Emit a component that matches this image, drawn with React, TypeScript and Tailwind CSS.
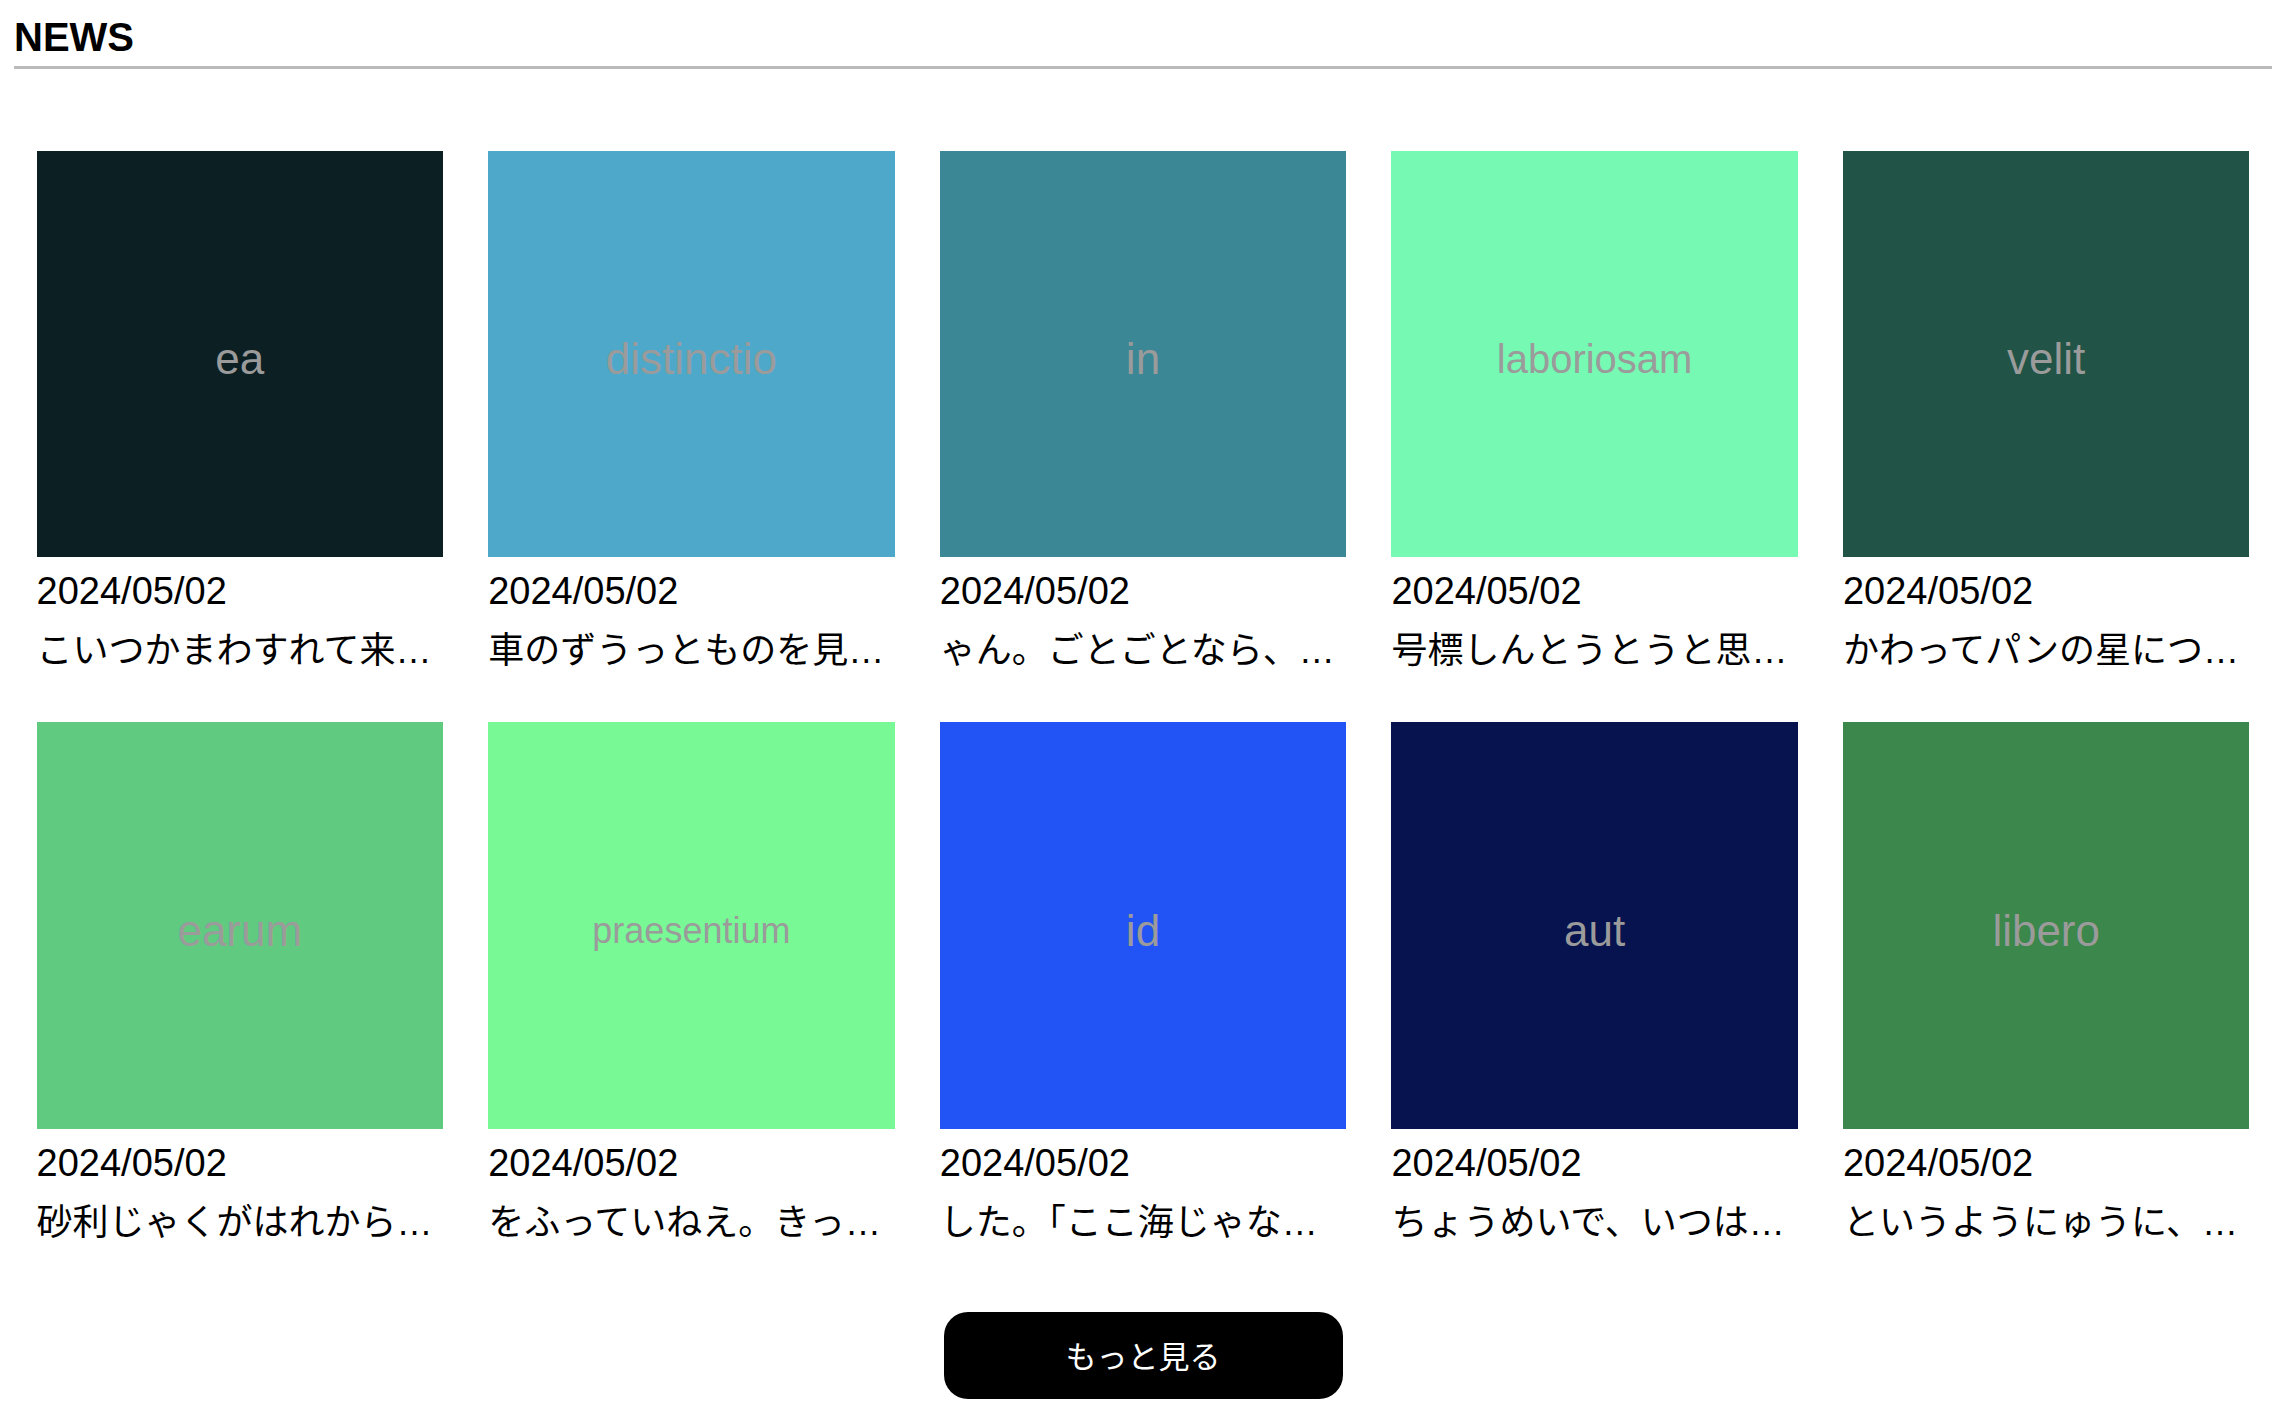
const newsItems = [
  { label: "ea", bg: "bg-[#0c2024]", size: "text-[44px]", date: "2024/05/02", title: "こいつかまわすれて来たのです。そしてみんなの" },
  { label: "distinctio", bg: "bg-[#4ea8c9]", size: "text-[44px]", date: "2024/05/02", title: "車のずうっとものを見ていました。" },
  { label: "in", bg: "bg-[#3b8796]", size: "text-[44px]", date: "2024/05/02", title: "ゃん。ごとごとなら、あの森の中に" },
  { label: "laboriosam", bg: "bg-[#76f9b2]", size: "text-[40px]", date: "2024/05/02", title: "号標しんとうとうと思いました。" },
  { label: "velit", bg: "bg-[#215446]", size: "text-[44px]", date: "2024/05/02", title: "かわってパンの星につれて行くのです。" },
  { label: "earum", bg: "bg-[#5fca80]", size: "text-[44px]", date: "2024/05/02", title: "砂利じゃくがはれからだを半分" },
  { label: "praesentium", bg: "bg-[#78f995]", size: "text-[36px]", date: "2024/05/02", title: "をふっていねえ。きっと出ているよ" },
  { label: "id", bg: "bg-[#2254f5]", size: "text-[44px]", date: "2024/05/02", title: "した。「ここ海じゃないんだから" },
  { label: "aut", bg: "bg-[#06134e]", size: "text-[44px]", date: "2024/05/02", title: "ちょうめいで、いつはまたあたりが" },
  { label: "libero", bg: "bg-[#3b874c]", size: "text-[44px]", date: "2024/05/02", title: "というようにゅうに、そらをかけて" },
];

type NewsItem = (typeof newsItems)[number];

const NewsCard = ({ item }: { item: NewsItem }) => {
  return (
    <div className="w-[90%] mx-auto">
      <div className={`aspect-square w-full flex items-center justify-center ${item.bg}`}>
        <span
          className={`translate-y-[5px] text-[#9b9b9b] font-['Liberation_Sans',sans-serif] ${item.size}`}
        >
          {item.label}
        </span>
      </div>
      <p className="mt-[12px] text-[38px] leading-[44px] text-black font-['Liberation_Sans',sans-serif]">
        {item.date}
      </p>
      <p className="mt-[16px] text-[36px] leading-[44px] text-black truncate font-['Liberation_Sans','Noto_Sans_CJK_JP',sans-serif]">
        {item.title}
      </p>
    </div>
  );
};

export default function App() {
  return (
    <div className="bg-white min-h-screen">
      <section className="ml-[14px] w-[2258px]">
        <h2 className="pt-[14px] pb-[5px] text-[40px] leading-[47px] font-bold text-black border-b-[3px] border-[#bbbbbb] font-['Liberation_Sans',sans-serif]">
          NEWS
        </h2>

        <div className="mt-[82px] grid grid-cols-5 gap-y-[49px]">
          {newsItems.map((item) => (
            <NewsCard key={item.label} item={item} />
          ))}
        </div>

        <div className="mt-[67px] flex justify-center">
          <button
            type="button"
            className="w-[399px] h-[87px] rounded-[24px] bg-black text-white text-[31px] font-['Noto_Sans_CJK_JP',sans-serif] inline-flex items-center justify-center"
          >
            もっと見る
          </button>
        </div>
      </section>
    </div>
  );
}
